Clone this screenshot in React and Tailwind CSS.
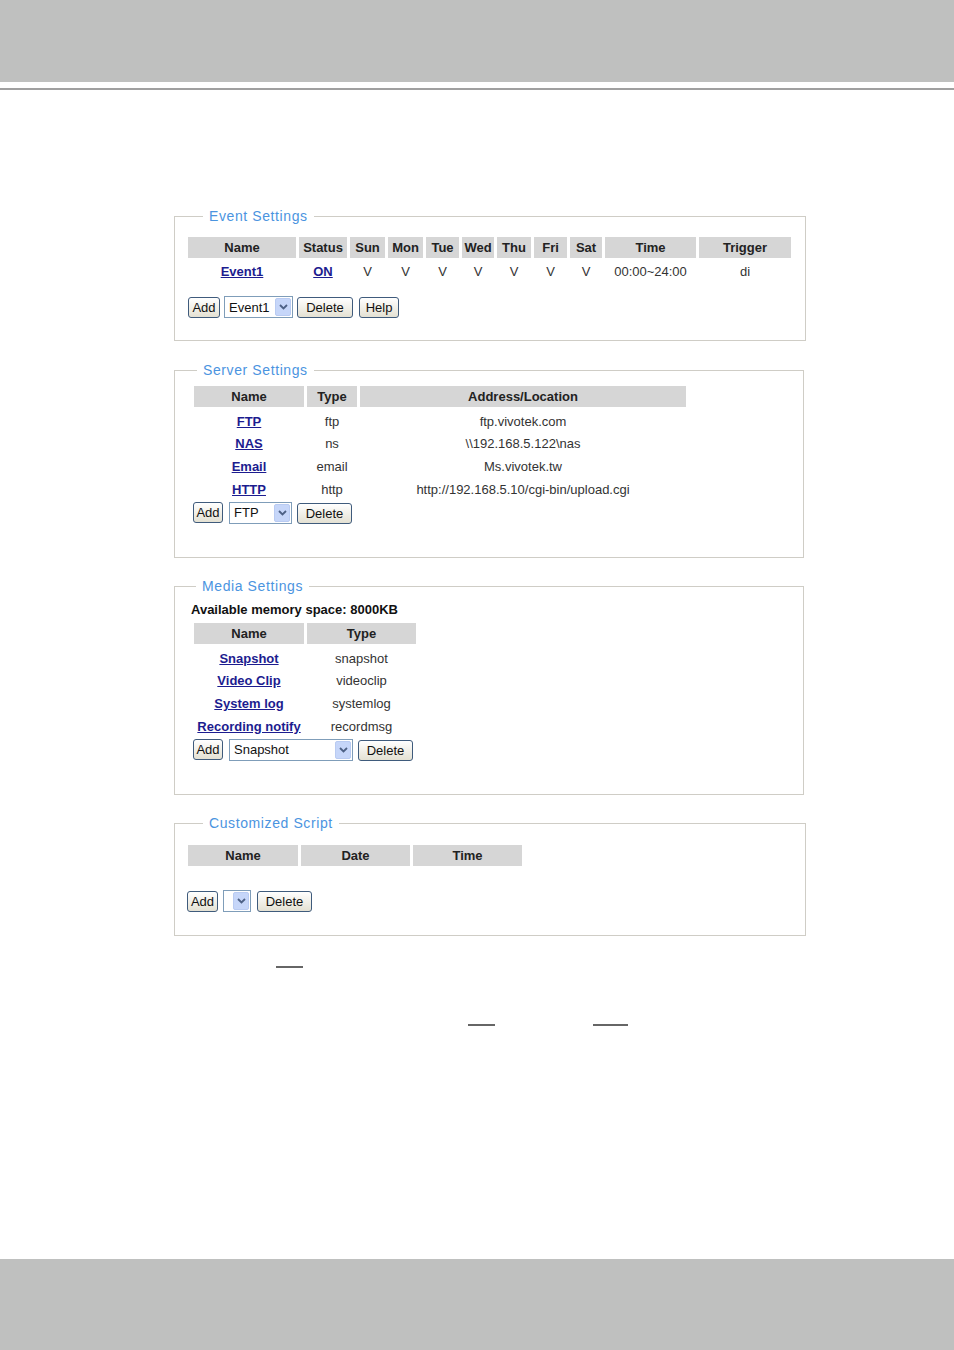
const font = { fontFamily: '"Liberation Sans", Arial, sans-serif' };

function Btn({ label, w }) {
  return (
    <button
      className={`h-[21px] ${w} rounded-[3px] border border-[#3f5b7c] bg-gradient-to-b from-white to-[#e4e1d3] text-[13px] leading-none text-[#111]`}
    >
      {label}
    </button>
  );
}

function Select({ value, w }) {
  return (
    <div className={`flex h-[22px] ${w} items-center justify-between border border-[#7f9db9] bg-white pl-[4px] pr-[1px]`}>
      <span className="text-[13px] leading-none text-[#111]">{value}</span>
      <span className="flex h-[18px] w-[16px] items-center justify-center rounded-[2px] border border-[#b9cbf2] bg-[#c6d6f9]">
        <svg width="9" height="6" viewBox="0 0 9 6">
          <path d="M1 1 L4.5 4.5 L8 1" fill="none" stroke="#4d6185" strokeWidth="1.8" />
        </svg>
      </span>
    </div>
  );
}

function Head({ cols }) {
  return (
    <div className="flex gap-[3px]">
      {cols.map(([label, w]) => (
        <div key={label} className={`flex h-[21px] ${w} items-center justify-center bg-[#d6d6d6] text-[13px] font-bold text-[#222]`}>
          {label}
        </div>
      ))}
    </div>
  );
}

function Row({ cells, h = "h-[22.7px]" }) {
  return (
    <div className={`flex gap-[3px] ${h}`}>
      {cells.map(([text, w, link], i) => (
        <div key={i} className={`flex ${w} items-center justify-center text-[13px]`}>
          {link ? (
            <a className="font-bold text-[#1c1c8f] underline">{text}</a>
          ) : (
            <span className="text-[#333]">{text}</span>
          )}
        </div>
      ))}
    </div>
  );
}

function Box({ title, h, w, pl, lm, children }) {
  return (
    <fieldset className={`${h} ${w} border border-[#cfcdc6] ${pl}`}>
      <legend className={`${lm} px-[6px] text-[14px] leading-[16px] tracking-[0.6px] text-[#4b94df]`}>{title}</legend>
      {children}
    </fieldset>
  );
}

export default function App() {
  const days = ["Sun", "Mon", "Tue", "Wed", "Thu", "Fri", "Sat"];
  const dayW = ["w-[35px]", "w-[35px]", "w-[33px]", "w-[32px]", "w-[34px]", "w-[33px]", "w-[32px]"];

  const servers = [
    ["FTP", "ftp", "ftp.vivotek.com"],
    ["NAS", "ns", "\\\\192.168.5.122\\nas"],
    ["Email", "email", "Ms.vivotek.tw"],
    ["HTTP", "http", "http://192.168.5.10/cgi-bin/upload.cgi"],
  ];

  const media = [
    ["Snapshot", "snapshot"],
    ["Video Clip", "videoclip"],
    ["System log", "systemlog"],
    ["Recording notify", "recordmsg"],
  ];

  return (
    <div className="flex h-[1350px] w-full flex-col bg-white" style={font}>
      <div className="h-[82px] w-full bg-[#bfc0bf]" />
      <div className="mt-[6px] h-[2px] w-full bg-[#a0a0a0]" />

      <div className="flex flex-col pl-[174px]">
        {/* Event Settings */}
        <div className="mt-[118px]">
          <Box title="Event Settings" h="h-[133px]" w="w-[632px]" pl="pl-[13px]" lm="ml-[15px]">
            <div className="mt-[13px]">
              <Head
                cols={[
                  ["Name", "w-[108px]"],
                  ["Status", "w-[48px]"],
                  ...days.map((d, i) => [d, dayW[i]]),
                  ["Time", "w-[91px]"],
                  ["Trigger", "w-[92px]"],
                ]}
              />
              <div className="mt-[3px]">
                <Row
                  h="h-[22px]"
                  cells={[
                    ["Event1", "w-[108px]", true],
                    ["ON", "w-[48px]", true],
                    ...dayW.map((w) => ["V", w]),
                    ["00:00~24:00", "w-[91px]"],
                    ["di", "w-[92px]"],
                  ]}
                />
              </div>
              <div className="mt-[12px] flex items-center">
                <Btn label="Add" w="w-[32px]" />
                <div className="ml-[4px]"><Select value="Event1" w="w-[69px]" /></div>
                <div className="ml-[4px]"><Btn label="Delete" w="w-[56px]" /></div>
                <div className="ml-[6px]"><Btn label="Help" w="w-[40px]" /></div>
              </div>
            </div>
          </Box>
        </div>

        {/* Server Settings */}
        <div className="mt-[21px]">
          <Box title="Server Settings" h="h-[196px]" w="w-[630px]" pl="pl-[19px]" lm="ml-[3px]">
            <div className="mt-[8px]">
              <Head cols={[["Name", "w-[110px]"], ["Type", "w-[50px]"], ["Address/Location", "w-[326px]"]]} />
              <div className="mt-[3px] flex flex-col">
                {servers.map(([n, t, a]) => (
                  <Row key={n} cells={[[n, "w-[110px]", true], [t, "w-[50px]"], [a, "w-[326px]"]]} />
                ))}
              </div>
              <div className="-ml-[1px] mt-[0px] flex items-center">
                <Btn label="Add" w="w-[30px]" />
                <div className="ml-[6px]"><Select value="FTP" w="w-[63px]" /></div>
                <div className="ml-[5px]"><Btn label="Delete" w="w-[55px]" /></div>
              </div>
            </div>
          </Box>
        </div>

        {/* Media Settings */}
        <div className="mt-[20px]">
          <Box title="Media Settings" h="h-[217px]" w="w-[630px]" pl="pl-[19px]" lm="ml-[2px]">
            <div className="-ml-[3px] mt-[8px] text-[13px] font-bold leading-[16px] text-[#111]">
              Available memory space: 8000KB
            </div>
            <div className="mt-[5px]">
              <Head cols={[["Name", "w-[110px]"], ["Type", "w-[109px]"]]} />
              <div className="mt-[3px] flex flex-col">
                {media.map(([n, t]) => (
                  <Row key={n} cells={[[n, "w-[110px]", true], [t, "w-[109px]"]]} />
                ))}
              </div>
              <div className="-ml-[1px] mt-[0px] flex items-center">
                <Btn label="Add" w="w-[30px]" />
                <div className="ml-[6px]"><Select value="Snapshot" w="w-[124px]" /></div>
                <div className="ml-[5px]"><Btn label="Delete" w="w-[55px]" /></div>
              </div>
            </div>
          </Box>
        </div>

        {/* Customized Script */}
        <div className="mt-[20px]">
          <Box title="Customized Script" h="h-[121px]" w="w-[632px]" pl="pl-[13px]" lm="ml-[15px]">
            <div className="mt-[14px]">
              <Head cols={[["Name", "w-[110px]"], ["Date", "w-[109px]"], ["Time", "w-[109px]"]]} />
              <div className="-ml-[1px] mt-[23px] flex items-center">
                <Btn label="Add" w="w-[31px]" />
                <div className="ml-[5px]"><Select value="" w="w-[28px]" /></div>
                <div className="ml-[6px]"><Btn label="Delete" w="w-[55px]" /></div>
              </div>
            </div>
          </Box>
        </div>

        {/* leftover underline marks */}
        <div className="ml-[102px] mt-[30px] h-[2px] w-[27px] bg-[#666]" />
        <div className="ml-[294px] mt-[56px] flex gap-[98px]">
          <div className="h-[2px] w-[27px] bg-[#666]" />
          <div className="h-[2px] w-[35px] bg-[#666]" />
        </div>
      </div>

      <div className="mt-auto h-[91px] w-full bg-[#bfc0bf]" />
    </div>
  );
}
